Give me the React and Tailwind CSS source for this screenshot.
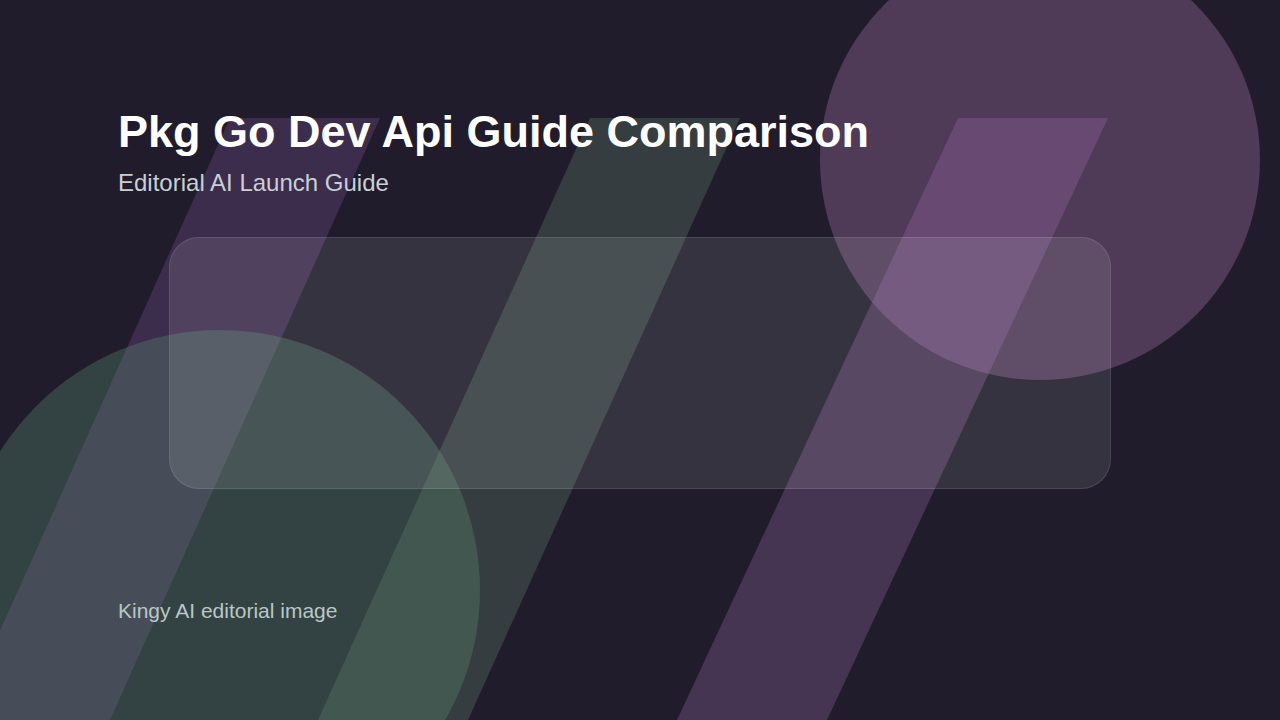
export default function App() {
  return (
    <div className="relative w-[1280px] h-[720px] overflow-hidden bg-[#201c2b]" style={{ fontFamily: '"Liberation Sans", Arial, sans-serif' }}>
      <svg className="absolute inset-0" width="1280" height="720" viewBox="0 0 1280 720">
        <circle cx="1040" cy="160" r="220" fill="#4f3a58" />
        <polygon points="230,118 380,118 110,720 -40,720" fill="#8a5aa0" fillOpacity="0.28" />
        <polygon points="590,118 740,118 468,720 318,720" fill="#5e7a68" fillOpacity="0.35" />
        <polygon points="958,118 1108,118 827,720 677,720" fill="#a06cb0" fillOpacity="0.3" />
        <circle cx="220" cy="590" r="260" fill="#5a8a70" fillOpacity="0.35" />
      </svg>
      <div className="absolute left-[169px] top-[237px] w-[942px] h-[252px] rounded-[30px] bg-white/10 border border-white/10" />
      <div className="relative flex flex-col h-full pl-[118px] pt-[106px] pb-[96px]">
        <h1 className="text-[45px] font-bold text-white leading-[52px]">Pkg Go Dev Api Guide Comparison</h1>
        <p className="text-[24px] text-[#c8d0d4] mt-[10px] leading-[30px]">Editorial AI Launch Guide</p>
        <p className="mt-auto text-[21px] text-[#b8c8c4] leading-[26px]">Kingy AI editorial image</p>
      </div>
    </div>
  );
}
